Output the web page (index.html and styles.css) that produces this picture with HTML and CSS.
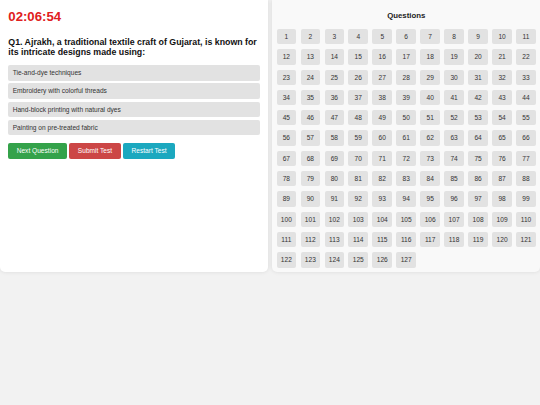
FILE: index.html
```html
<html lang="en">
  <head>
    <meta charset="UTF-8" />
    <meta name="viewport" content="width=device-width, initial-scale=1.0" />
    <title>Online Test</title>
    <link rel="stylesheet" href="styles.css">
  </head>
  <body>
    <div class="container">
      <div class="quiz">
        <div class="timer">02:06:54</div>
        <div class="question">Q1. Ajrakh, a traditional textile craft of Gujarat, is known for its intricate designs made using:</div>
        <div class="options">
          <div class="option">Tie-and-dye techniques</div>
          <div class="option">Embroidery with colorful threads</div>
          <div class="option">Hand-block printing with natural dyes</div>
          <div class="option">Painting on pre-treated fabric</div>
        </div>
        <div class="actions">
          <span class="btn next">Next Question</span>
          <span class="btn submit">Submit Test</span>
          <span class="btn restart">Restart Test</span>
        </div>
      </div>
      <div class="palette">
        <div class="palette-title">Questions</div>
        <div class="grid">
          <span class="qno">1</span><span class="qno">2</span><span class="qno">3</span><span class="qno">4</span><span class="qno">5</span><span class="qno">6</span><span class="qno">7</span><span class="qno">8</span><span class="qno">9</span><span class="qno">10</span>
          <span class="qno">11</span><span class="qno">12</span><span class="qno">13</span><span class="qno">14</span><span class="qno">15</span><span class="qno">16</span><span class="qno">17</span><span class="qno">18</span><span class="qno">19</span><span class="qno">20</span>
          <span class="qno">21</span><span class="qno">22</span><span class="qno">23</span><span class="qno">24</span><span class="qno">25</span><span class="qno">26</span><span class="qno">27</span><span class="qno">28</span><span class="qno">29</span><span class="qno">30</span>
          <span class="qno">31</span><span class="qno">32</span><span class="qno">33</span><span class="qno">34</span><span class="qno">35</span><span class="qno">36</span><span class="qno">37</span><span class="qno">38</span><span class="qno">39</span><span class="qno">40</span>
          <span class="qno">41</span><span class="qno">42</span><span class="qno">43</span><span class="qno">44</span><span class="qno">45</span><span class="qno">46</span><span class="qno">47</span><span class="qno">48</span><span class="qno">49</span><span class="qno">50</span>
          <span class="qno">51</span><span class="qno">52</span><span class="qno">53</span><span class="qno">54</span><span class="qno">55</span><span class="qno">56</span><span class="qno">57</span><span class="qno">58</span><span class="qno">59</span><span class="qno">60</span>
          <span class="qno">61</span><span class="qno">62</span><span class="qno">63</span><span class="qno">64</span><span class="qno">65</span><span class="qno">66</span><span class="qno">67</span><span class="qno">68</span><span class="qno">69</span><span class="qno">70</span>
          <span class="qno">71</span><span class="qno">72</span><span class="qno">73</span><span class="qno">74</span><span class="qno">75</span><span class="qno">76</span><span class="qno">77</span><span class="qno">78</span><span class="qno">79</span><span class="qno">80</span>
          <span class="qno">81</span><span class="qno">82</span><span class="qno">83</span><span class="qno">84</span><span class="qno">85</span><span class="qno">86</span><span class="qno">87</span><span class="qno">88</span><span class="qno">89</span><span class="qno">90</span>
          <span class="qno">91</span><span class="qno">92</span><span class="qno">93</span><span class="qno">94</span><span class="qno">95</span><span class="qno">96</span><span class="qno">97</span><span class="qno">98</span><span class="qno">99</span><span class="qno">100</span>
          <span class="qno">101</span><span class="qno">102</span><span class="qno">103</span><span class="qno">104</span><span class="qno">105</span><span class="qno">106</span><span class="qno">107</span><span class="qno">108</span><span class="qno">109</span><span class="qno">110</span>
          <span class="qno">111</span><span class="qno">112</span><span class="qno">113</span><span class="qno">114</span><span class="qno">115</span><span class="qno">116</span><span class="qno">117</span><span class="qno">118</span><span class="qno">119</span><span class="qno">120</span>
          <span class="qno">121</span><span class="qno">122</span><span class="qno">123</span><span class="qno">124</span><span class="qno">125</span><span class="qno">126</span><span class="qno">127</span>
        </div>
      </div>
    </div>
  </body>
</html>
```

FILE: styles.css
```css
* {
  box-sizing: border-box;
}
body {
  margin: 0;
  background-color: #f2f2f2;
  font-family: "Liberation Sans", Arial, sans-serif;
  color: #222;
}
.container {
  display: flex;
  gap: 4px;
  align-items: stretch;
}
.quiz {
  flex: 0 0 calc(50% - 2px);
  min-width: 0;
  background-color: #fff;
  padding: 8.5px 8.3px;
  border-radius: 0 0 5px 5px;
  box-shadow: 0 0 4px rgba(0, 0, 0, 0.1);
}
.timer {
  font-size: 13.2px;
  line-height: 15.2px;
  font-weight: bold;
  color: #e02020;
}
.question {
  margin-top: 13.5px;
  font-size: 8.8px;
  line-height: 10.1px;
  font-weight: bold;
  color: #111;
}
.options {
  margin-top: 7.9px;
}
.option {
  background-color: #e2e2e2;
  font-size: 6.6px;
  color: #333;
  height: 15.5px;
  line-height: 15.5px;
  padding: 0 4.4px;
  border-radius: 2px;
  margin-bottom: 2.7px;
}
.actions {
  margin-top: 8px;
  display: flex;
  gap: 2.6px;
}
.btn {
  font-size: 6.6px;
  color: #fff;
  height: 16px;
  line-height: 16px;
  padding: 0 8.4px;
  border-radius: 2px;
  cursor: pointer;
}
.next {
  background-color: #34a24a;
}
.submit {
  background-color: #cc4646;
}
.restart {
  background-color: #1ba8bf;
}
.palette {
  flex: 0 0 calc(50% - 2px);
  min-width: 0;
  background-color: #f9f9f9;
  padding: 4.4px 4.2px 4.4px 4.6px;
  border-radius: 0 0 5px 5px;
  box-shadow: 0 0 4px rgba(0, 0, 0, 0.1);
}
.palette-title {
  text-align: center;
  font-size: 7.8px;
  line-height: 9px;
  font-weight: bold;
  margin: 6.8px 0 8.8px;
}
.grid {
  display: grid;
  grid-template-columns: repeat(11, 1fr);
  column-gap: 4.4px;
  row-gap: 5px;
}
.qno {
  background-color: #e2e2e2;
  color: #333;
  font-size: 6.6px;
  height: 15.3px;
  line-height: 15.3px;
  text-align: center;
  border-radius: 2px;
  cursor: pointer;
}
```
